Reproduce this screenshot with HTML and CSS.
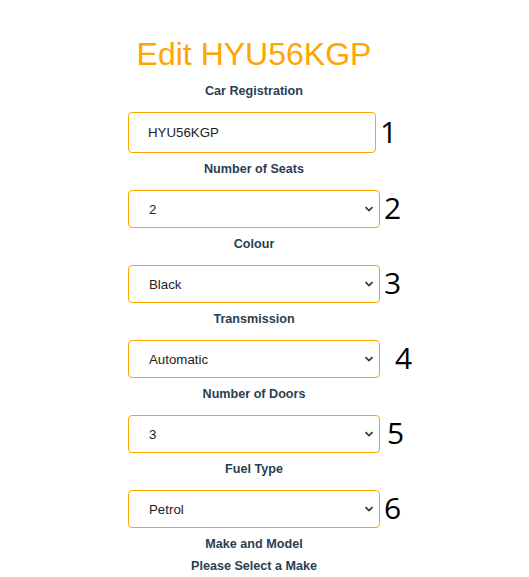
FILE: index.html
```html
<!DOCTYPE html>
<html lang="en">
<head>
<meta charset="utf-8">
<title>Edit HYU56KGP</title>
<link rel="stylesheet" href="styles.css">
</head>
<body>
<main class="page">
  <h1 class="title">Edit HYU56KGP</h1>
  <form class="form">
    <label class="field-label" for="reg">Car Registration</label>
    <div class="field-row">
      <input class="field-control field-input" id="reg" type="text" value="HYU56KGP">
      <span class="field-num">1</span>
    </div>

    <label class="field-label" for="seats">Number of Seats</label>
    <div class="field-row">
      <div class="select-wrap">
        <select class="field-control field-select" id="seats"><option>2</option></select>
        <svg class="chevron" width="10" height="6" viewBox="0 0 10 6"><path d="M1.5 1.2 L5 4.6 L8.5 1.2" fill="none" stroke="#3a3a3a" stroke-width="1.8"/></svg>
      </div>
      <span class="field-num">2</span>
    </div>

    <label class="field-label" for="colour">Colour</label>
    <div class="field-row">
      <div class="select-wrap">
        <select class="field-control field-select" id="colour"><option>Black</option></select>
        <svg class="chevron" width="10" height="6" viewBox="0 0 10 6"><path d="M1.5 1.2 L5 4.6 L8.5 1.2" fill="none" stroke="#3a3a3a" stroke-width="1.8"/></svg>
      </div>
      <span class="field-num">3</span>
    </div>

    <label class="field-label" for="trans">Transmission</label>
    <div class="field-row">
      <div class="select-wrap">
        <select class="field-control field-select" id="trans"><option>Automatic</option></select>
        <svg class="chevron" width="10" height="6" viewBox="0 0 10 6"><path d="M1.5 1.2 L5 4.6 L8.5 1.2" fill="none" stroke="#3a3a3a" stroke-width="1.8"/></svg>
      </div>
      <span class="field-num field-num--wide">4</span>
    </div>

    <label class="field-label" for="doors">Number of Doors</label>
    <div class="field-row">
      <div class="select-wrap">
        <select class="field-control field-select" id="doors"><option>3</option></select>
        <svg class="chevron" width="10" height="6" viewBox="0 0 10 6"><path d="M1.5 1.2 L5 4.6 L8.5 1.2" fill="none" stroke="#3a3a3a" stroke-width="1.8"/></svg>
      </div>
      <span class="field-num field-num--mid">5</span>
    </div>

    <label class="field-label" for="fuel">Fuel Type</label>
    <div class="field-row">
      <div class="select-wrap">
        <select class="field-control field-select" id="fuel"><option>Petrol</option></select>
        <svg class="chevron" width="10" height="6" viewBox="0 0 10 6"><path d="M1.5 1.2 L5 4.6 L8.5 1.2" fill="none" stroke="#3a3a3a" stroke-width="1.8"/></svg>
      </div>
      <span class="field-num">6</span>
    </div>

    <p class="field-label">Make and Model</p>
    <p class="field-label field-label--note">Please Select a Make</p>
  </form>
</main>
</body>
</html>
```

FILE: styles.css
```css
html, body {
  margin: 0;
  padding: 0;
  background: #ffffff;
}

.page {
  font-family: "Liberation Sans", Arial, Helvetica, sans-serif;
  color: #2c3e50;
  padding: 36px 0 0 128px;
  width: 252px;
}

.title {
  margin: 0 0 11px;
  font-size: 32px;
  line-height: 37px;
  font-weight: normal;
  color: #ffa500;
  text-align: center;
  white-space: nowrap;
}

.form {
  display: flex;
  flex-direction: column;
  margin: 0;
}

.field-label {
  display: block;
  margin: 9px 0 13px;
  font-size: 12.6px;
  line-height: 15px;
  font-weight: bold;
  text-align: center;
  white-space: nowrap;
}

.title + .form .field-label:first-child {
  margin-top: 0;
}

.field-label--note {
  margin-top: -6px;
}

.field-row {
  display: flex;
  align-items: center;
  width: 252px;
  position: relative;
}

.field-control {
  box-sizing: border-box;
  width: 252px;
  margin: 0;
  border: 1px solid #ffa500;
  border-radius: 4px;
  background: #ffffff;
  font-family: "Liberation Sans", Arial, Helvetica, sans-serif;
  font-size: 13.3px;
  color: #222222;
  outline: none;
}

.field-input {
  height: 41px;
  padding: 0 0 0 19px;
}

.select-wrap {
  position: relative;
  flex: none;
  width: 252px;
  height: 38px;
}

.field-select {
  height: 38px;
  padding: 0 0 0 20px;
  appearance: none;
  -webkit-appearance: none;
}

.chevron {
  position: absolute;
  right: 6px;
  top: 16px;
  pointer-events: none;
}

.field-num {
  flex: none;
  margin-left: 4px;
  margin-top: -2px;
  font-family: "Open Sans", sans-serif;
  font-size: 30px;
  line-height: 30px;
  color: #000000;
  white-space: nowrap;
  width: 0;
  overflow: visible;
}

.field-num--wide {
  margin-left: 15px;
}

.field-num--mid {
  margin-left: 7px;
}
```
